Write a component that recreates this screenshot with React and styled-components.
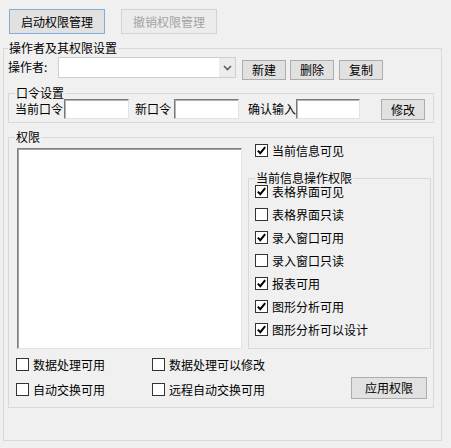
import { createGlobalStyle } from "styled-components";
import styled from "styled-components";

const GlobalStyle = createGlobalStyle`
  html, body {
    margin: 0;
    background: #f0f0f0;
  }
  body {
    font-family: "Noto Sans CJK SC", "Liberation Sans", sans-serif;
    font-size: 12px;
    color: #000;
  }
  * {
    box-sizing: border-box;
  }
`

const Check = ({ on }) => (
  <CheckBox>
    {on && (
      <svg width="11" height="11" viewBox="0 0 11 11">
        <path d="M1.8 5.6 L4.3 8.2 L9.2 2.2" fill="none" stroke="#000" strokeWidth="2" />
      </svg>
    )}
  </CheckBox>
)

const CheckItem = ({ on, label }) => (
  <CheckRow>
    <Check on={on} />
    <span>{label}</span>
  </CheckRow>
)

const App = () => {
  const rights = [
    ["表格界面可见", true],
    ["表格界面只读", false],
    ["录入窗口可用", true],
    ["录入窗口只读", false],
    ["报表可用", true],
    ["图形分析可用", true],
    ["图形分析可以设计", true],
  ]

  return (
    <Window>
      <GlobalStyle />
      <Toolbar>
        <Button $w={96} $h={25} $focus>启动权限管理</Button>
        <Button $w={96} $h={25} disabled>撤销权限管理</Button>
      </Toolbar>

      <Group $w={439} $h={393} $mt={14}>
        <Caption $x={4}>操作者及其权限设置</Caption>
        <OuterBody>
          <OperatorRow>
            <Label $w={50}>操作者:</Label>
            <Combo>
              <ComboArrow>
                <svg width="9" height="6" viewBox="0 0 9 6">
                  <path d="M1 1 L4.5 4.5 L8 1" fill="none" stroke="#606060" strokeWidth="1.6" />
                </svg>
              </ComboArrow>
            </Combo>
            <Button $w={44} $h={20} $ml={6} $mt={3}>新建</Button>
            <Button $w={44} $h={20} $ml={4} $mt={3}>删除</Button>
            <Button $w={44} $h={20} $ml={5} $mt={3}>复制</Button>
          </OperatorRow>

          <Group $w={426} $h={30} $mt={13}>
            <Caption $x={6}>口令设置</Caption>
            <PasswordRow>
              <Label $w={49}>当前口令</Label>
              <TextBox $w={65} />
              <Label $w={39} $ml={6}>新口令</Label>
              <TextBox $w={65} />
              <Label $w={48} $ml={9}>确认输入</Label>
              <TextBox $w={64} />
              <Button $w={44} $h={21} $ml={21}>修改</Button>
            </PasswordRow>
          </Group>

          <Group $w={426} $h={271} $mt={14}>
            <Caption $x={6}>权限</Caption>
            <PermBody>
              <PermTop>
                <ListBox />
                <RightCol>
                  <TopCheck>
                    <CheckItem on label="当前信息可见" />
                  </TopCheck>
                  <Group $w={183} $h={171} $mt={21}>
                    <Caption $x={6}>当前信息操作权限</Caption>
                    <RightsList>
                      {rights.map(([label, on]) => (
                        <CheckItem key={label} on={on} label={label} />
                      ))}
                    </RightsList>
                  </Group>
                </RightCol>
              </PermTop>
              <PermBottom>
                <BottomChecks>
                  <CheckItem label="数据处理可用" />
                  <CheckItem label="数据处理可以修改" />
                  <CheckItem label="自动交换可用" />
                  <CheckItem label="远程自动交换可用" />
                </BottomChecks>
                <ApplyButton $w={76} $h={22}>应用权限</ApplyButton>
              </PermBottom>
            </PermBody>
          </Group>
        </OuterBody>
      </Group>
    </Window>
  )
}

export default App;

const Window = styled.div`
  width: 451px;
  height: 448px;
  padding: 9px 0 0 3px;
  overflow: hidden;
`

const Toolbar = styled.div`
  display: flex;
  gap: 16px;
  margin-left: 6px;
`

const Button = styled.button`
  width: ${p => p.$w}px;
  height: ${p => p.$h}px;
  margin-left: ${p => p.$ml || 0}px;
  margin-top: ${p => p.$mt || 0}px;
  padding: 0;
  flex-shrink: 0;
  font: inherit;
  line-height: 1;
  color: #000;
  background: #e1e1e1;
  border: 1px solid ${p => p.$focus ? "#7eaedd" : "#adadad"};
  border-radius: 0;

  &:disabled {
    color: #a3a3a3;
    background: #ececec;
    border-color: #d3d3d3;
  }
`

const ApplyButton = styled(Button)`
  margin-left: auto;
  margin-right: 6px;
  margin-top: 19px;
`

const Group = styled.div`
  position: relative;
  width: ${p => p.$w}px;
  height: ${p => p.$h}px;
  margin-top: ${p => p.$mt || 0}px;
  border: 1px solid #d9d9d9;
  flex-shrink: 0;
`

const Caption = styled.span`
  position: absolute;
  top: -7px;
  left: ${p => p.$x}px;
  padding: 0 1px;
  line-height: 12px;
  background: #f0f0f0;
  white-space: nowrap;
`

const OuterBody = styled.div`
  padding: 8px 0 0 4px;
`

const OperatorRow = styled.div`
  display: flex;
  align-items: flex-start;
`

const Label = styled.span`
  width: ${p => p.$w}px;
  margin-left: ${p => p.$ml || 0}px;
  flex-shrink: 0;
  line-height: 20px;
  white-space: nowrap;
`

const Combo = styled.div`
  display: flex;
  justify-content: flex-end;
  width: 178px;
  height: 21px;
  background: #fff;
  border: 1px solid #cfcfcf;
`

const ComboArrow = styled.div`
  display: flex;
  align-items: center;
  justify-content: center;
  width: 16px;
  background: #ececec;
`

const PasswordRow = styled.div`
  display: flex;
  align-items: flex-start;
  padding: 5px 0 0 6px;
`

const TextBox = styled.div`
  width: ${p => p.$w}px;
  height: 20px;
  flex-shrink: 0;
  background: #fff;
  border: 1px solid;
  border-color: #7a7a7a #e3e3e3 #e3e3e3 #7a7a7a;
  box-shadow: inset 1px 1px 0 #b4b4b4;
`

const PermBody = styled.div`
  padding: 6px 0 0 7px;
`

const PermTop = styled.div`
  display: flex;
  align-items: flex-start;
`

const ListBox = styled.div`
  width: 225px;
  height: 201px;
  margin: 4px 0 0 1px;
  flex-shrink: 0;
  background: #fff;
  border: 1px solid;
  border-color: #828282 #e3e3e3 #e3e3e3 #828282;
  box-shadow: inset 1px 1px 0 #a0a0a0;
`

const RightCol = styled.div`
  display: flex;
  flex-direction: column;
  margin-left: 6px;
`

const TopCheck = styled.div`
  padding-left: 7px;
`

const RightsList = styled.div`
  display: flex;
  flex-direction: column;
  gap: 10px;
  padding: 6px 0 0 6px;
`

const CheckRow = styled.div`
  display: flex;
  align-items: center;
  gap: 4px;
  height: 13px;
  line-height: 13px;
  white-space: nowrap;
`

const CheckBox = styled.span`
  display: flex;
  align-items: center;
  justify-content: center;
  width: 13px;
  height: 13px;
  flex-shrink: 0;
  background: #fff;
  border: 1px solid #333;
`

const PermBottom = styled.div`
  display: flex;
  align-items: flex-start;
  margin-top: 9px;
`

const BottomChecks = styled.div`
  display: grid;
  grid-template-columns: 136px 136px;
  row-gap: 12px;
`
